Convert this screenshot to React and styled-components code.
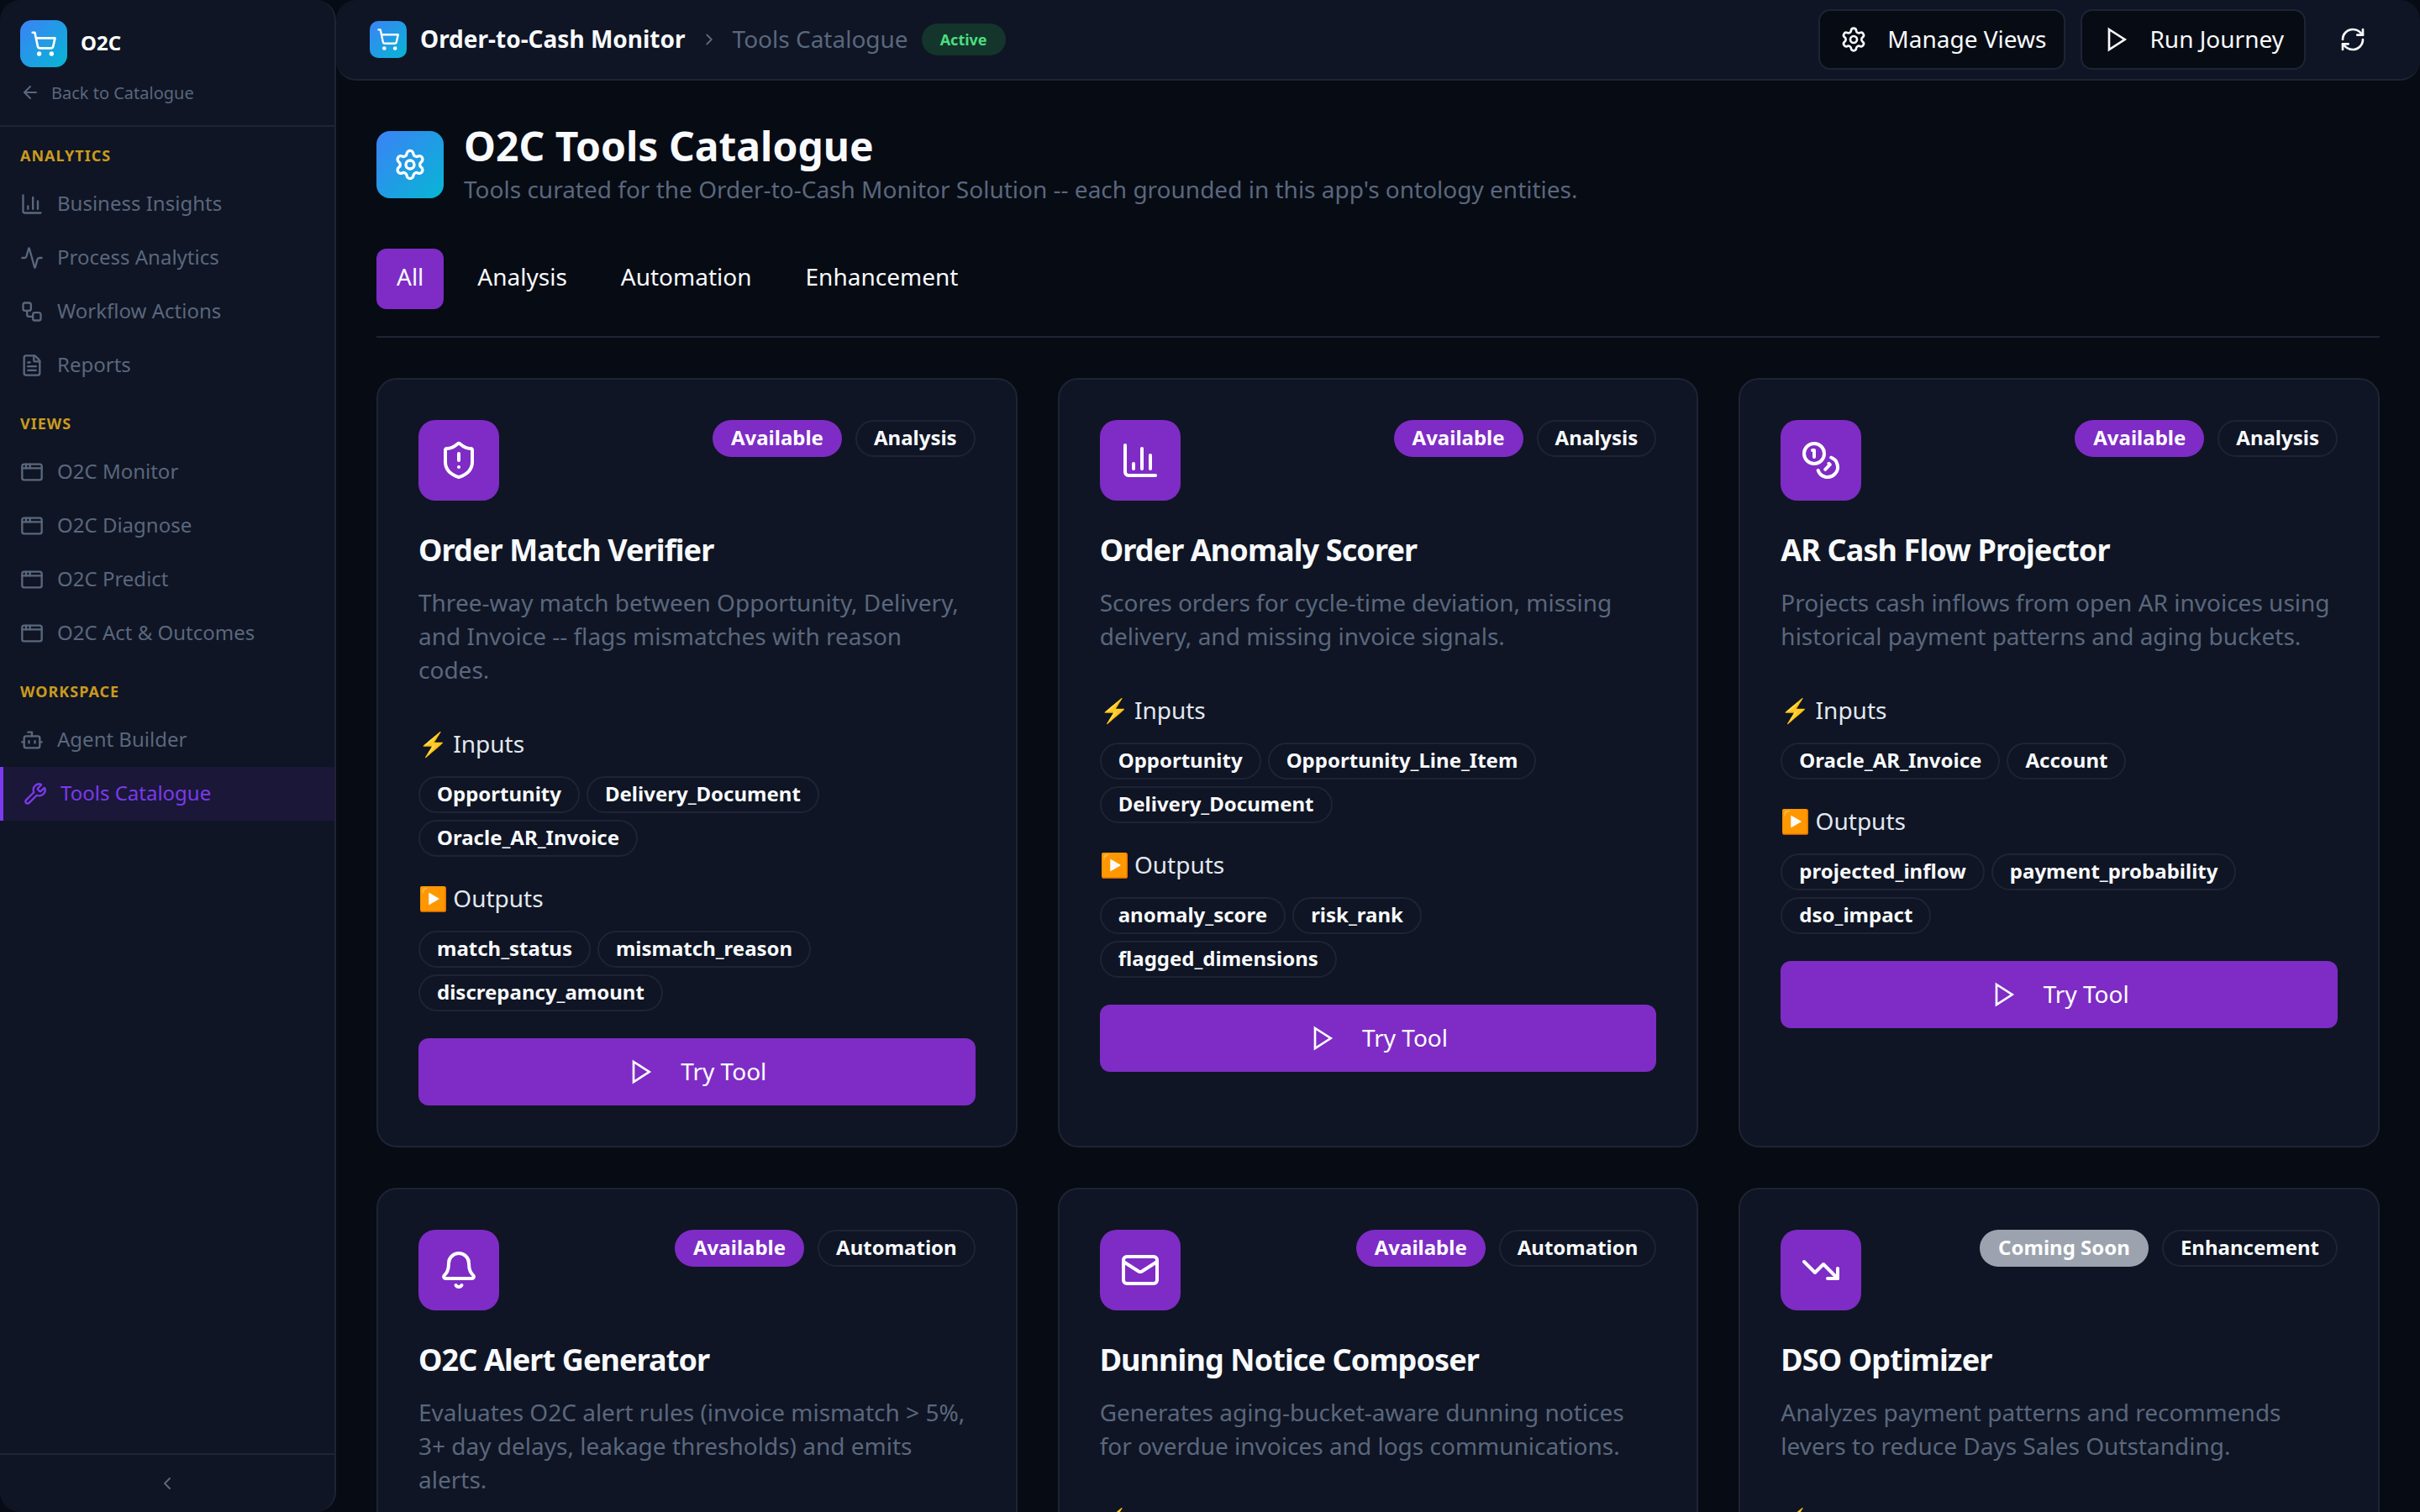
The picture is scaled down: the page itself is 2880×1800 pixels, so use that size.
import React from 'react';
import styled, { createGlobalStyle } from 'styled-components';
import {
  Activity, AppWindow, ArrowLeft, Bell, Bot, ChartColumn, ChevronLeft, ChevronRight, Coins,
  FileText, Mail, RefreshCw, Settings, ShieldAlert, ShoppingCart, TrendingDown, Workflow, Wrench,
} from 'lucide-react';

const navGroups = [
  {
    label: 'ANALYTICS',
    items: [
      { name: 'Business Insights', icon: ChartColumn },
      { name: 'Process Analytics', icon: Activity },
      { name: 'Workflow Actions', icon: Workflow },
      { name: 'Reports', icon: FileText },
    ],
  },
  {
    label: 'VIEWS',
    items: [
      { name: 'O2C Monitor', icon: AppWindow },
      { name: 'O2C Diagnose', icon: AppWindow },
      { name: 'O2C Predict', icon: AppWindow },
      { name: 'O2C Act & Outcomes', icon: AppWindow },
    ],
  },
  {
    label: 'WORKSPACE',
    items: [
      { name: 'Agent Builder', icon: Bot },
      { name: 'Tools Catalogue', icon: Wrench, active: true },
    ],
  },
];

const tools = [
  {
    name: 'Order Match Verifier',
    icon: ShieldAlert,
    status: 'Available',
    kind: 'Analysis',
    text: 'Three-way match between Opportunity, Delivery, and Invoice -- flags mismatches with reason codes.',
    inputs: ['Opportunity', 'Delivery_Document', 'Oracle_AR_Invoice'],
    outputs: ['match_status', 'mismatch_reason', 'discrepancy_amount'],
  },
  {
    name: 'Order Anomaly Scorer',
    icon: ChartColumn,
    status: 'Available',
    kind: 'Analysis',
    text: 'Scores orders for cycle-time deviation, missing delivery, and missing invoice signals.',
    inputs: ['Opportunity', 'Opportunity_Line_Item', 'Delivery_Document'],
    outputs: ['anomaly_score', 'risk_rank', 'flagged_dimensions'],
  },
  {
    name: 'AR Cash Flow Projector',
    icon: Coins,
    status: 'Available',
    kind: 'Analysis',
    text: 'Projects cash inflows from open AR invoices using historical payment patterns and aging buckets.',
    inputs: ['Oracle_AR_Invoice', 'Account'],
    outputs: ['projected_inflow', 'payment_probability', 'dso_impact'],
  },
  {
    name: 'O2C Alert Generator',
    icon: Bell,
    status: 'Available',
    kind: 'Automation',
    text: 'Evaluates O2C alert rules (invoice mismatch > 5%, 3+ day delays, leakage thresholds) and emits alerts.',
  },
  {
    name: 'Dunning Notice Composer',
    icon: Mail,
    status: 'Available',
    kind: 'Automation',
    text: 'Generates aging-bucket-aware dunning notices for overdue invoices and logs communications.',
  },
  {
    name: 'DSO Optimizer',
    icon: TrendingDown,
    status: 'Coming Soon',
    kind: 'Enhancement',
    text: 'Analyzes payment patterns and recommends levers to reduce Days Sales Outstanding.',
  },
];

function PlayIcon({ size }) {
  return (
    <svg width={size} height={size} viewBox="0 0 24 24" fill="none" stroke="currentColor" strokeWidth="2" strokeLinejoin="miter">
      <polygon points="6 3 20 12 6 21 6 3" />
    </svg>
  );
}

function ToolCard({ tool }) {
  const Icon = tool.icon;
  return (
    <Card>
      <CardTop>
        <ToolIcon><Icon size={48} /></ToolIcon>
        <Pills>
          <StatusPill $soon={tool.status === 'Coming Soon'}>{tool.status}</StatusPill>
          <Chip>{tool.kind}</Chip>
        </Pills>
      </CardTop>
      <CardTitle>{tool.name}</CardTitle>
      <CardText>{tool.text}</CardText>
      <SectionLabel>⚡ Inputs</SectionLabel>
      {tool.inputs && (
        <>
          <ChipRow>{tool.inputs.map((c) => <Chip key={c}>{c}</Chip>)}</ChipRow>
          <SectionLabel>▶️ Outputs</SectionLabel>
          <ChipRow>{tool.outputs.map((c) => <Chip key={c}>{c}</Chip>)}</ChipRow>
          <TryButton><PlayIcon size={32} /> <span>Try Tool</span></TryButton>
        </>
      )}
    </Card>
  );
}

export default function App() {
  return (
    <>
      <GlobalStyle />
      <Shell>
        <Sidebar>
          <Brand>
            <BrandRow>
              <LogoBox><ShoppingCart size={32} /></LogoBox>
              <BrandName>O2C</BrandName>
            </BrandRow>
            <BackLink><ArrowLeft size={24} /> Back to Catalogue</BackLink>
          </Brand>
          <Nav>
            {navGroups.map((group) => (
              <div key={group.label}>
                <GroupLabel>{group.label}</GroupLabel>
                {group.items.map((item) => {
                  const Icon = item.icon;
                  return (
                    <NavItem key={item.name} $active={item.active}>
                      <Icon size={28} />
                      <span>{item.name}</span>
                    </NavItem>
                  );
                })}
              </div>
            ))}
          </Nav>
          <Collapse><ChevronLeft size={24} /></Collapse>
        </Sidebar>
        <Right>
          <TopBar>
            <Crumbs>
              <SmallLogo><ShoppingCart size={28} /></SmallLogo>
              <AppTitle>Order-to-Cash Monitor</AppTitle>
              <CrumbSep><ChevronRight size={22} /></CrumbSep>
              <CrumbPage>Tools Catalogue</CrumbPage>
              <ActiveBadge>Active</ActiveBadge>
            </Crumbs>
            <TopActions>
              <OutlineButton $tight><Settings size={32} /> <span>Manage Views</span></OutlineButton>
              <OutlineButton><PlayIcon size={32} /> <span>Run Journey</span></OutlineButton>
              <RefreshButton><RefreshCw size={32} /></RefreshButton>
            </TopActions>
          </TopBar>
          <Content>
            <Heading>
              <HeadingIcon><Settings size={40} /></HeadingIcon>
              <div>
                <PageTitle>O2C Tools Catalogue</PageTitle>
                <PageSub>Tools curated for the Order-to-Cash Monitor Solution -- each grounded in this app's ontology entities.</PageSub>
              </div>
            </Heading>
            <Tabs>
              <Tab $active>All</Tab>
              <Tab>Analysis</Tab>
              <Tab>Automation</Tab>
              <Tab>Enhancement</Tab>
            </Tabs>
            <Grid>
              {tools.map((tool) => <ToolCard key={tool.name} tool={tool} />)}
            </Grid>
          </Content>
        </Right>
      </Shell>
    </>
  );
}

const GlobalStyle = createGlobalStyle`
  * { box-sizing: border-box; }
  html, body { margin: 0; background: #070b14; }
  body { font-family: "Noto Sans", sans-serif; color: #f1f5f9; }
`;

const Shell = styled.div`
  display: flex;
  height: 100vh;
  overflow: hidden;
  background: #070b14;
`;

const Sidebar = styled.aside`
  flex: 0 0 400px;
  display: flex;
  flex-direction: column;
  background: #0f1524;
  border-right: 2px solid #1e2433;
  border-radius: 24px;
`;

const Brand = styled.div`
  height: 151px;
  padding: 24px 24px 0;
  border-bottom: 2px solid #1e2433;
`;

const BrandRow = styled.div`
  display: flex;
  align-items: center;
  gap: 16px;
`;

const gradient = 'linear-gradient(135deg, #3b82f6, #06b6d4)';

const LogoBox = styled.div`
  width: 56px;
  height: 56px;
  border-radius: 14px;
  background: ${gradient};
  color: #fff;
  display: flex;
  align-items: center;
  justify-content: center;
`;

const BrandName = styled.div`
  margin-top: -3px;
  font-size: 24px;
  font-weight: 700;
  color: #fff;
`;

const BackLink = styled.div`
  display: flex;
  align-items: center;
  gap: 13px;
  margin-top: 12px;
  height: 36px;
  font-size: 20px;
  color: #5a677d;
`;

const Nav = styled.nav`
  flex: 1;
  padding-top: 16px;
  display: flex;
  flex-direction: column;
  gap: 19px;
`;

const GroupLabel = styled.div`
  height: 36px;
  line-height: 36px;
  padding-left: 24px;
  margin-bottom: 8px;
  font-size: 18px;
  font-weight: 700;
  letter-spacing: 1px;
  color: #ca9a1e;
`;

const NavItem = styled.div`
  height: 64px;
  display: flex;
  align-items: center;
  gap: 16px;
  padding-left: 24px;
  font-size: 24px;
  color: ${(p) => (p.$active ? '#7c3aed' : '#5a677d')};
  background: ${(p) => (p.$active ? '#1a1738' : 'transparent')};
  border-left: ${(p) => (p.$active ? '4px solid #7c3aed' : '0')};

  span {
    margin-top: -3px;
  }
`;

const Collapse = styled.div`
  height: 70px;
  border-top: 2px solid #1e2433;
  display: flex;
  align-items: center;
  justify-content: center;
  color: #5a677d;
`;

const Right = styled.div`
  flex: 1;
  min-width: 0;
  display: flex;
  flex-direction: column;
`;

const TopBar = styled.header`
  flex: 0 0 96px;
  display: flex;
  align-items: center;
  justify-content: space-between;
  padding: 0 64px 0 40px;
  background: #0f1524;
  border-bottom: 2px solid #1e2433;
  border-radius: 24px;
`;

const Crumbs = styled.div`
  display: flex;
  align-items: center;
  line-height: 38px;
`;

const SmallLogo = styled.div`
  width: 44px;
  height: 44px;
  border-radius: 10px;
  background: ${gradient};
  color: #fff;
  display: flex;
  align-items: center;
  justify-content: center;
`;

const AppTitle = styled.div`
  margin: -2px 0 0 16px;
  font-size: 28px;
  font-weight: 700;
  color: #f8fafc;
`;

const CrumbSep = styled.div`
  margin: 0 17px;
  display: flex;
  color: #5a677d;
`;

const CrumbPage = styled.div`
  margin-top: -2px;
  font-size: 28px;
  color: #5a677d;
`;

const ActiveBadge = styled.div`
  margin-left: 16px;
  height: 38px;
  line-height: 38px;
  padding: 0 22px;
  border-radius: 19px;
  background: #14352c;
  color: #4ade80;
  font-size: 18px;
  font-weight: 700;
`;

const TopActions = styled.div`
  display: flex;
  align-items: center;
  gap: 18px;
`;

const OutlineButton = styled.div`
  height: 72px;
  display: flex;
  align-items: center;
  gap: 24px;
  padding: 0 ${(p) => (p.$tight ? '21px' : '24px')} 0 24px;
  font-size: 28px;
  color: #f8fafc;
  background: #070b14;
  border: 2px solid #1e2433;
  border-radius: 14px;

  span {
    margin-top: -3px;
  }
`;

const RefreshButton = styled.div`
  display: flex;
  margin-left: 22px;
  color: #f8fafc;
`;

const Content = styled.main`
  flex: 1;
  min-height: 0;
  overflow: hidden;
  padding: 60px 48px 0;
`;

const Heading = styled.div`
  display: flex;
  align-items: flex-start;
  gap: 24px;
  height: 80px;
`;

const HeadingIcon = styled.div`
  width: 80px;
  height: 80px;
  border-radius: 16px;
  background: ${gradient};
  color: #fff;
  display: flex;
  align-items: center;
  justify-content: center;
`;

const PageTitle = styled.h1`
  margin: -10px 0 0;
  font-size: 48px;
  line-height: 56px;
  font-weight: 700;
  color: #f8fafc;
`;

const PageSub = styled.p`
  margin: 3px 0 0;
  font-size: 28px;
  line-height: 40px;
  color: #5a677d;
`;

const Tabs = styled.div`
  display: flex;
  gap: 16px;
  margin-top: 60px;
  padding-bottom: 32px;
  border-bottom: 2px solid #1e2433;
`;

const Tab = styled.div`
  height: 72px;
  line-height: 67px;
  padding: 0 24px;
  font-size: 28px;
  color: #f8fafc;
  border-radius: 12px;
  background: ${(p) => (p.$active ? '#7e2cc5' : 'transparent')};
`;

const Grid = styled.div`
  display: grid;
  grid-template-columns: repeat(3, 1fr);
  gap: 48px;
  margin-top: 48px;
`;

const Card = styled.article`
  padding: 48px;
  background: #0f1524;
  border: 2px solid #1e2433;
  border-radius: 24px;
`;

const CardTop = styled.div`
  display: flex;
  justify-content: space-between;
  align-items: flex-start;
`;

const ToolIcon = styled.div`
  width: 96px;
  height: 96px;
  border-radius: 20px;
  background: #7e2cc5;
  color: #fff;
  display: flex;
  align-items: center;
  justify-content: center;
`;

const Pills = styled.div`
  display: flex;
  gap: 16px;
`;

const StatusPill = styled.div`
  height: 44px;
  line-height: 42px;
  padding: 0 22px;
  border-radius: 22px;
  font-size: 24px;
  font-weight: 700;
  color: #fff;
  background: ${(p) => (p.$soon ? '#9ca3af' : '#7e2cc5')};
`;

const Chip = styled.div`
  height: 44px;
  line-height: 38px;
  padding: 0 20px;
  border: 2px solid #1e2433;
  border-radius: 22px;
  font-size: 24px;
  font-weight: 700;
  color: #f8fafc;
`;

const CardTitle = styled.h3`
  margin: 36px 0 0;
  font-size: 36px;
  line-height: 46px;
  font-weight: 700;
  letter-spacing: -0.9px;
  color: #f8fafc;
`;

const CardText = styled.p`
  margin: 19px 0 49px;
  font-size: 28px;
  line-height: 40px;
  color: #5a677d;
`;

const SectionLabel = styled.div`
  margin-top: 30px;
  height: 40px;
  line-height: 38px;
  font-size: 28px;
  word-spacing: -1px;
  color: #e2e8f0;
`;

const ChipRow = styled.div`
  display: flex;
  flex-wrap: wrap;
  gap: 8px;
  margin-top: 18px;
`;

const TryButton = styled.div`
  margin-top: 32px;
  height: 80px;
  display: flex;
  align-items: center;
  justify-content: center;
  gap: 32px;
  font-size: 28px;
  color: #fff;
  background: #7e2cc5;
  border-radius: 12px;

  span {
    margin-top: -3px;
  }
`;
